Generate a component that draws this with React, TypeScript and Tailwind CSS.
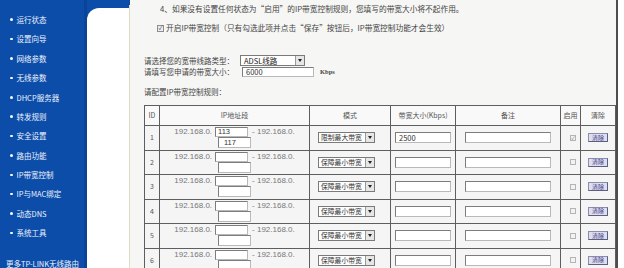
import React from 'react';

const menu = [
  '运行状态',
  '设置向导',
  '网络参数',
  '无线参数',
  'DHCP服务器',
  '转发规则',
  '安全设置',
  '路由功能',
  'IP带宽控制',
  'IP与MAC绑定',
  '动态DNS',
  '系统工具',
];

interface Rule {
  id: number;
  start: string;
  end: string;
  mode: string;
  bw: string;
  on: boolean;
}

const rules: Rule[] = [1, 2, 3, 4, 5, 6].map((id) => ({
  id,
  start: id === 1 ? '113' : '',
  end: id === 1 ? '117' : '',
  mode: id === 1 ? '限制最大带宽' : '保障最小带宽',
  bw: id === 1 ? '2500' : '',
  on: id === 1,
}));

const Box: React.FC<{ className: string; value?: string }> = ({ className, value }) => (
  <div
    className={`bg-white border border-[#7c7c7c] border-b-[#b9b9b9] border-r-[#b9b9b9] flex items-center pl-[2px] text-[7.5px] leading-none text-[#333] ${className}`}
  >
    {value}
  </div>
);

const Arrow = () => (
  <div className="w-[9px] h-full bg-[#e6e6e6] border-l border-[#9a9a9a] flex items-center justify-center">
    <div className="w-0 h-0 border-l-[2.5px] border-r-[2.5px] border-t-[3px] border-l-transparent border-r-transparent border-t-[#222]" />
  </div>
);

const Sidebar = () => (
  <aside className="w-[87px] shrink-0 bg-[#0b4da8] border-r-[3px] border-[#0a4499] flex flex-col pt-[10px] text-[#eef3ff]">
    {menu.map((m) => (
      <div key={m} className="h-[19.4px] flex items-center pl-[10px] text-[7.5px] leading-none">
        <span className="w-[2.5px] h-[2.5px] rounded-full bg-white mr-[4px]" />
        {m}
      </div>
    ))}
    <div className="mt-[17px] pl-[6px] text-[7.5px] leading-none whitespace-nowrap">更多TP-LINK无线路由</div>
  </aside>
);

export default function App() {
  return (
    <div className="w-[624px] h-[268px] flex overflow-hidden bg-white font-['Noto_Sans_CJK_SC','Liberation_Sans',sans-serif]">
      <Sidebar />

      <div className="w-[42px] shrink-0 bg-[#0b4da8] flex flex-col">
        <div className="mt-[8px] flex-1 bg-white rounded-tl-[12px]" />
      </div>
      <div className="w-px shrink-0 bg-[#0b4da8] flex flex-col">
        <div className="mt-[5px] flex-1 bg-[#e2dbc4]" />
      </div>

      <div className="w-[486px] shrink-0 flex flex-col">
        <div className="h-[5px] bg-[#1d5b8b]" />
        <div className="flex-1 bg-[#f6f6f4] text-[#444] text-[7.7px] leading-none flex flex-col">
          <div className="mt-[4px] h-[10px] flex items-center pl-[30px] whitespace-nowrap">
            4、如果没有设置任何状态为“启用”的IP带宽控制规则，您填写的带宽大小将不起作用。
          </div>

          <div className="mt-[9px] h-[10px] flex items-center pl-[27px] whitespace-nowrap">
            <div className="w-[7px] h-[7px] border border-[#8d8d8d] bg-[#eeeeee] flex items-center justify-center text-[6px] text-[#444] mr-[2px]">
              ✓
            </div>
            开启IP带宽控制（只有勾选此项并点击“保存”按钮后，IP带宽控制功能才会生效）
          </div>

          <div className="mt-[22px] h-[11px] flex items-center pl-[14px] text-[7.5px]">
            <span className="w-[96px]">请选择您的宽带线路类型：</span>
            <div className="w-[65px] h-[11px] bg-white border border-[#7a7a7a] flex items-center">
              <span className="flex-1 pl-[3px] text-[#222]">ADSL线路</span>
              <Arrow />
            </div>
          </div>

          <div className="mt-[1px] h-[10px] flex items-center pl-[14px] text-[7.5px]">
            <span className="w-[98px]">请填写您申请的带宽大小：</span>
            <Box className="w-[72px] h-[10px] pl-[3px]" value="6000" />
            <span className="ml-[6px] text-[6.5px] font-bold font-['Liberation_Serif',serif]">Kbps</span>
          </div>

          <div className="mt-[10px] h-[10px] flex items-center pl-[14px] text-[7.5px]">请配置IP带宽控制规则：</div>

          <table className="mt-[8px] ml-[14px] w-[471px] table-fixed border-collapse text-[7px] text-[#555]">
            <colgroup>
              <col className="w-[15px]" />
              <col className="w-[150px]" />
              <col className="w-[81px]" />
              <col className="w-[65px]" />
              <col className="w-[105px]" />
              <col className="w-[20px]" />
              <col className="w-[35px]" />
            </colgroup>
            <thead>
              <tr className="h-[20px] bg-[#f9f9f9]">
                {['ID', 'IP地址段', '模式', '带宽大小(Kbps)', '备注', '启用', '清除'].map((h) => (
                  <th key={h} className="border border-[#5e5e5e] font-normal p-0 text-center whitespace-nowrap">
                    {h}
                  </th>
                ))}
              </tr>
            </thead>
            <tbody>
              {rules.map((r) => (
                <tr key={r.id} className="h-[24.5px] bg-[#f5f5f5]">
                  <td className="border border-[#5e5e5e] p-0 text-center">{r.id}</td>
                  <td className="border border-[#5e5e5e] p-0 align-top">
                    <div className="pt-[1px] flex flex-col items-center text-[8px] font-['Liberation_Sans',sans-serif] text-[#777]">
                      <div className="h-[10px] flex items-center whitespace-nowrap">
                        <span>192.168.0.</span>
                        <Box className="w-[33px] h-[10px] ml-[3px] mr-[4px]" value={r.start} />
                        <span>- 192.168.0.</span>
                      </div>
                      <Box className="w-[33px] h-[11px] pl-[5px]" value={r.end} />
                    </div>
                  </td>
                  <td className="border border-[#5e5e5e] p-0">
                    <div className="ml-[8px] w-[57px] h-[11px] bg-white border border-[#7a7a7a] flex items-center">
                      <span className="flex-1 pl-[2px] text-[6.8px] text-[#333] whitespace-nowrap">{r.mode}</span>
                      <Arrow />
                    </div>
                  </td>
                  <td className="border border-[#5e5e5e] p-0">
                    <Box className="ml-[4px] w-[56px] h-[11px] pl-[3px]" value={r.bw} />
                  </td>
                  <td className="border border-[#5e5e5e] p-0">
                    <Box className="ml-[9px] w-[86px] h-[11px]" />
                  </td>
                  <td className="border border-[#5e5e5e] p-0">
                    <div className="ml-[9px] w-[6px] h-[6px] border border-[#b4b4b4] bg-[#f2f2f2] flex items-center justify-center text-[5px] text-[#777]">
                      {r.on ? '✓' : ''}
                    </div>
                  </td>
                  <td className="border border-[#5e5e5e] p-0">
                    <div className="mx-auto w-[20px] h-[9px] bg-[#dedeec] border border-[#8c8cae] border-b-[#5e5e80] border-r-[#5e5e80] flex items-center justify-center text-[6px] text-[#3a3a8c]">
                      清除
                    </div>
                  </td>
                </tr>
              ))}
            </tbody>
          </table>
        </div>
      </div>

      <div className="w-[2px] shrink-0 bg-[#4d4d4d]" />
      <div className="flex-1 bg-white" />
    </div>
  );
}
